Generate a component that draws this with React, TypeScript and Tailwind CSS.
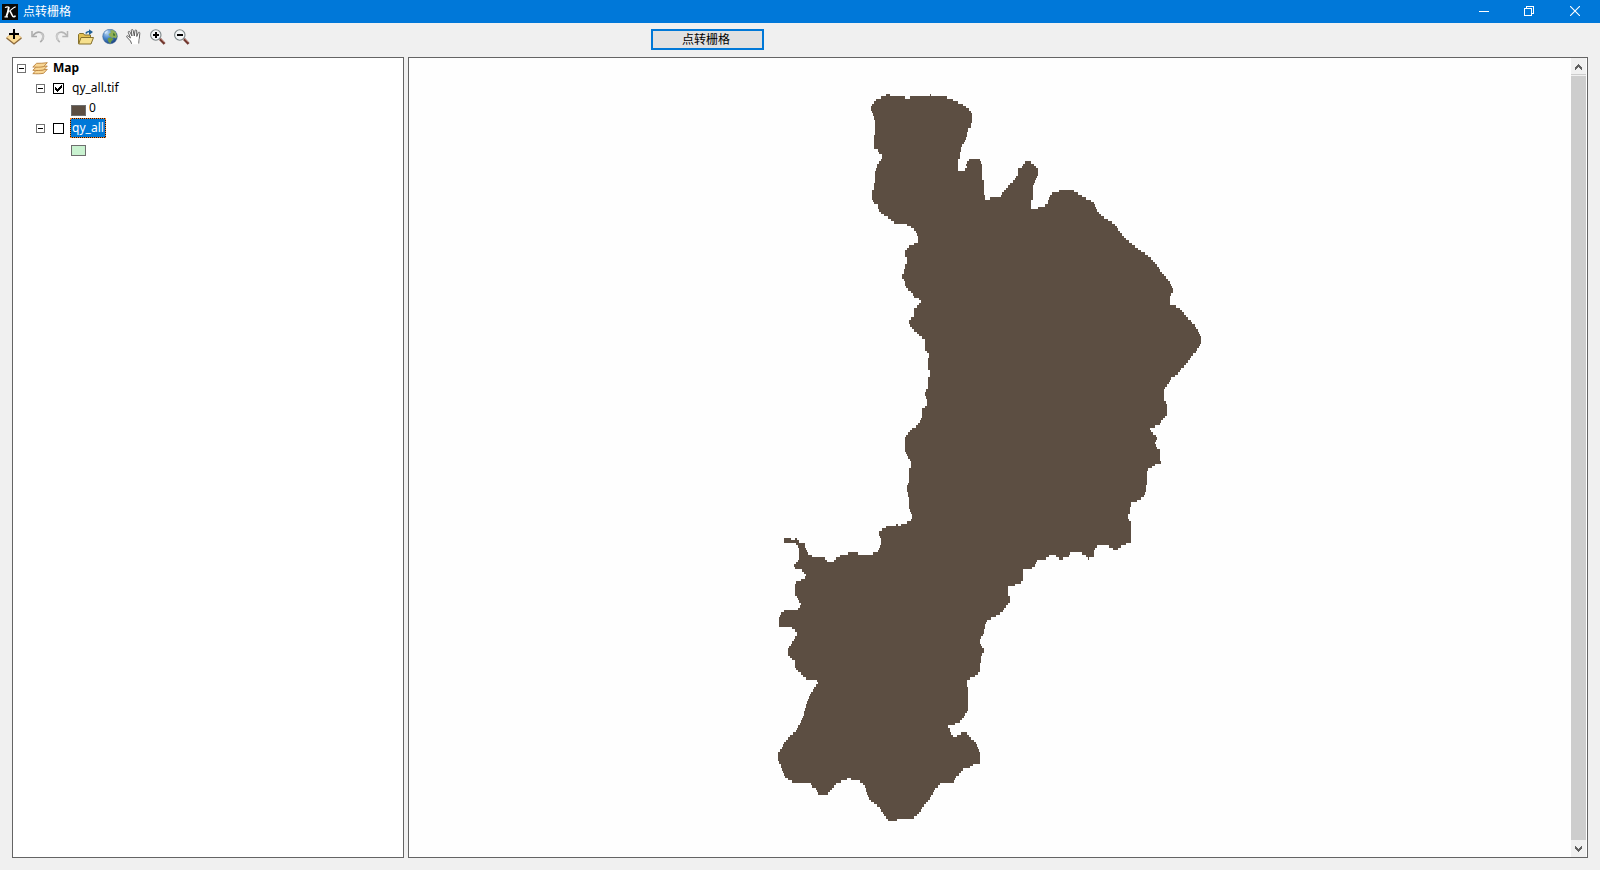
import type { ReactNode } from "react";

type Tile = { x: number; y: number; pts: string };

// Region outline, stored per tile; offsets inside a tile are thirds of a pixel.
const outline: Tile[] = [
  {
    x: 850,
    y: 80,
    pts: "63,80 72,68 80,57 102,50 108,44 120,44 125,50 162,51 165,54 185,52 204,46 242,45 255,51 290,52 312,62 335,72 355,86 363,95 366,110 365,128 361,143 354,147 351,168 342,188 333,205 329,238 324,240 324,272 334,276 345,270 351,262 347,252 352,244 360,235 383,234 391,242 396,255 397,300 402,305 402,340 405,345 405,360 413,360 425,352 450,354 457,338 474,320 492,300 504,283 505,264 515,263 524,247 540,246 553,257 564,268 563,290 555,304 550,318 549,355 543,360 543,383 551,390 561,388 566,381 580,380 592,372 598,350 610,338 635,330 668,330 685,342 710,357",
  },
  {
    x: 1050,
    y: 180,
    pts: "130,66 134,75 141,92 158,109 175,121 197,136 212,160 232,180 250,194 265,209 290,223 305,238 320,254 333,274 345,291 360,304 363,320 369,323 368,338 363,340 360,360 360,372 370,377 387,383 402,400 417,418 435,438 448,460 453,472 453,490 440,512 425,530 410,548 392,570 380,586 364,594 357,608 348,620 342,628 342,660 351,675 351,706 333,722 329,737 305,741 300,746 303,756 314,764 320,772",
  },
  {
    x: 940,
    y: 420,
    pts: "650,50 650,62 645,70 648,82 660,92 660,118 663,128 645,135 630,145 621,150 621,190 618,195 617,218 608,232 595,241 572,250 570,280 564,284 564,298 573,308 573,368 558,372 543,380 530,389 515,386 510,380 490,377 470,379 463,390 461,408 445,416 433,402 410,396 392,399 386,408 372,411 364,420 354,412 345,405 330,405 320,415 292,420 286,436 275,446 250,451 248,480 240,490 220,497 204,499 204,524 210,528 210,545 195,565 180,582 160,592 141,602 135,620 132,643 122,650 121,668 126,682 132,686 131,698 123,705 120,754 105,768 90,776 81,780 81,803 84,805",
  },
  {
    x: 760,
    y: 640,
    pts: "624,210 612,230 600,244 585,252 566,258 564,264 570,268 573,283 582,293 590,288 602,281 610,276 622,280 635,298 650,310 655,330 660,335 660,368 645,370 630,382 612,386 597,402 585,415 580,427 543,430 525,448 510,475 495,492 480,515 462,533 417,534 408,542 386,543 375,528 360,505 348,493 330,482 320,455 312,435 300,425 283,418 262,416 250,422 230,430 215,448 203,463 190,467 175,462 168,448 156,440 152,430 132,426 97,425 77,412 67,395 62,372 54,362 54,340 64,325 80,298 108,273 117,255 130,230 138,195 150,165 163,142 174,128 170,120 140,116 122,101 107,85 104,62 90,53 84,45 84,25 96,10",
  },
  {
    x: 760,
    y: 510,
    pts: "96,400 108,380 114,373 105,362 95,352 83,347 57,348 57,322 64,310 76,300 112,299 117,294 123,283 117,275 112,260 105,253 105,222 113,214 135,206 138,196 130,184 120,178 104,176 102,164 112,155 117,142 117,112 105,97 95,95 72,95 72,87 77,82 92,82 93,88 105,87 106,81 112,90 120,97 134,100 137,118 146,133 162,140 190,138 196,148 208,158 221,159 226,146 240,138 265,130 292,129 297,135 325,134 347,128 356,120 362,108 363,84 357,80 357,67 370,55 382,49 405,47 411,43 416,47 435,41 450,34 456,20 455,10 448,0",
  },
  {
    x: 860,
    y: 270,
    pts: "147,684 142,668 142,650 147,628 148,598 153,595 153,573 145,562 140,550 135,548 135,508 142,492 150,481 165,473 178,458 186,442 187,418 195,410 201,407 201,388 193,378 196,364 204,358 205,320 210,318 210,304 205,300 204,264 209,258 203,248 195,238 194,210 180,198 165,185 154,172 147,162 148,151 158,142 166,136 162,128 163,115 174,106 183,96 178,87 165,83 152,66 137,50 132,30 126,26 126,16 132,12 132,0",
  },
  {
    x: 850,
    y: 80,
    pts: "165,568 166,552 171,550 170,532 165,528 166,512 178,497 196,491 204,486 204,467 198,455 187,443 172,435 150,434 133,428 115,413 95,400 85,388 83,375 72,372 66,358 66,332 72,328 76,270 82,255 90,242 97,238 96,224 88,220 84,210 72,205 72,165 76,160 75,135 71,105 66,98 63,90",
  },
];

const ring = outline.flatMap((t) =>
  t.pts.split(" ").map((p) => {
    const [a, b] = p.split(",").map(Number);
    return [t.x + a / 3, t.y + b / 3] as const;
  }),
);

// Scan the outline into raster rows: one run of cells between each pair of crossings.
function rasterize(cell: number) {
  const runs: string[] = [];
  for (let i = 0; 94 + i * cell < 822; i++) {
    const top = Math.round(94 + i * cell);
    const bottom = Math.round(94 + (i + 1) * cell);
    const mid = (top + bottom) / 2 + 0.01;
    const xs: number[] = [];
    ring.forEach(([x1, y1], k) => {
      const [x2, y2] = ring[(k + 1) % ring.length];
      if (y1 > mid !== y2 > mid) xs.push(x1 + ((mid - y1) / (y2 - y1)) * (x2 - x1));
    });
    xs.sort((a, b) => a - b);
    for (let k = 0; k + 1 < xs.length; k += 2) {
      runs.push(`M${Math.round(xs[k])} ${top}H${Math.round(xs[k + 1])}V${bottom}H${Math.round(xs[k])}z`);
    }
  }
  return runs.join("");
}

const regionPath = rasterize(2.4);

function Icon({ children }: { children: ReactNode }) {
  return (
    <svg width="16" height="16" viewBox="0 0 16 16" fill="none" className="block shrink-0">
      {children}
    </svg>
  );
}

function AddDataIcon() {
  return (
    <Icon>
      <path d="M.6 8.500 8 3l7.400 5.500L8 14.500z" fill="#fbdc95" stroke="#d9b071" strokeWidth=".8" />
      <path d="M.5 9 8 15l7.500-6" stroke="#8d6a3c" strokeWidth="1.300" />
      <path d="M8 0v10M3 5h10" stroke="#000" strokeWidth="2" />
    </Icon>
  );
}

function UndoIcon() {
  return (
    <Icon>
      <path d="M2 2v5.500h5" stroke="#aaa" strokeWidth="1.500" />
      <path d="M2.800 6.800C5.500 3.300 8 2.600 10.500 3.400c3.700 1.200 4 5.700 1 8.600l-1.300 1" stroke="#aaa" strokeWidth="1.600" />
      <path d="M11.200 4.300c2.200 1.200 2.600 4 .6 6.600" stroke="#c4c4c4" strokeWidth="2" />
    </Icon>
  );
}

function RedoIcon() {
  return (
    <Icon>
      <path d="M13.500 2v5.500H8.300" stroke="#b5b5b5" strokeWidth="1.500" />
      <path d="M13 6.800C10.500 3.300 8 2.600 5.500 3.400c-3.700 1.200-4 5.700-1 8.600l1.300 1" stroke="#b5b5b5" strokeWidth="1.600" />
      <path d="M4.800 4.300C2.600 5.500 2.200 8.300 4.200 10.900" stroke="#ccc" strokeWidth="2" />
    </Icon>
  );
}

function FolderIcon() {
  return (
    <Icon>
      <path d="M.5 14.500V5.500l1-1h4l1 1.500h6v8.500z" fill="#e2c052" stroke="#85702c" />
      <path d="M3 8.500h12.500l-2.500 6.500H.7z" fill="#f6e08d" stroke="#85702c" />
      <path d="M8 4.500c.4-1.500 1.500-2 4-2" stroke="#1d5f97" strokeWidth="1.600" />
      <path d="M11 .2 15 3l-4 3z" fill="#1d5f97" />
    </Icon>
  );
}

function GlobeIcon() {
  return (
    <Icon>
      <defs>
        <radialGradient id="ocean" cx=".3" cy=".25" r=".8">
          <stop offset="0" stopColor="#b9d7f5" />
          <stop offset=".5" stopColor="#4482c8" />
          <stop offset="1" stopColor="#1c4484" />
        </radialGradient>
      </defs>
      <circle cx="8" cy="7.500" r="7.300" fill="url(#ocean)" stroke="#345f8d" strokeWidth=".5" />
      <path d="M8 1.500 11 .9l3 2.600 1 4-1 2-2-1-2 .5L7.500 7 6.500 5 9 3.500z" fill="#8fae58" />
      <path d="M7 8.500 10 9l1.500 1.500-2 1.500-1 2.500L6.500 13 5.500 10z" fill="#6f9b44" />
      <path d="m11 4 2 1v2l-2-.5z" fill="#467c32" />
      <path d="M2.500 3.500 5 1.500l1 .5-2.500 3z" fill="#d3e6f8" />
    </Icon>
  );
}

function HandIcon() {
  return (
    <Icon>
      <path
        d="M5.500 14.500 4.500 12 .8 8c-.5-1 .4-1.700 1.300-1L4.500 9 2.300 3.500c-.3-1.200 1-1.700 1.600-.6L6 7 5.300 1.500c0-1.300 1.500-1.400 1.800-.2L8.300 7 9 1.700c.2-1.100 1.600-1 1.700.2L10.800 7.500l1.500-3.800c.5-1 1.700-.5 1.500.6L13.300 9.500l-.8 5z"
        fill="#fff"
        stroke="#505050"
        strokeWidth=".9"
      />
      <path d="M6 14.500h6.500" stroke="#fff" strokeWidth="1.400" />
      <path d="M13.200 10v4.500" stroke="#c9c9c9" />
    </Icon>
  );
}

function ZoomIcon({ plus }: { plus?: boolean }) {
  return (
    <Icon>
      <path d="m10 10 4.600 4.800" stroke="#70372e" strokeWidth="2.600" />
      <path d="m10.500 9.500 4 4" stroke="#c08478" strokeWidth=".8" />
      <circle cx="5.800" cy="6" r="5.200" fill="#f4f7f8" stroke="#7b8587" strokeWidth="1.100" />
      <path d="M3 6h6" stroke="#000" strokeWidth="2" />
      {plus && <path d="M6 3v6" stroke="#000" strokeWidth="2" />}
    </Icon>
  );
}

function LayersIcon() {
  return (
    <svg width="16" height="13" viewBox="0 0 16 13" className="block shrink-0">
      {[7, 3.7, 0.4].map((y) => (
        <path
          key={y}
          transform={`translate(0 ${y})`}
          d="M.8 4.600 4.600.9C8 .9 11.500.9 15.300.3L11.600 4.300C8 4.900 4.500 4.900.8 4.600z"
          fill="#f9d795"
          stroke="#b9803a"
          strokeWidth=".9"
        />
      ))}
    </svg>
  );
}

function Expander() {
  return (
    <svg width="9" height="9" viewBox="0 0 9 9" className="block shrink-0" shapeRendering="crispEdges">
      <rect x=".5" y=".5" width="8" height="8" fill="#fff" stroke="#737373" />
      <path d="M2 4.500h5" stroke="#000" />
    </svg>
  );
}

function Check({ on }: { on?: boolean }) {
  return (
    <svg width="11" height="11" viewBox="0 0 11 11" className="block shrink-0" shapeRendering="crispEdges">
      <path d="M.5.5h10v10H.5z" fill="#fff" stroke="#000" />
      {on && <path d="M2 4h1v1h1v1h1V5h1V4h1V3h1V2h1v3H8v1H7v1H6v1H5v1H4V8H3V7H2z" fill="#000" />}
    </svg>
  );
}

function TitleBar() {
  return (
    <header className="flex h-[23px] shrink-0 items-center bg-[#0078d9] pl-[2px] text-white">
      <svg width="16" height="16" viewBox="0 0 16 16" className="block shrink-0" fill="none" stroke="#fff">
        <rect width="16" height="16" fill="#080808" stroke="none" />
        <path d="M6.900 3C6.200 7 5.400 10 4.300 12.700" strokeWidth="1.800" />
        <path d="M3 3.700c1.300-1.100 2.800-1 4.200-.5M2.500 12.900h3.500M13.700 2.900C11 3 9.500 6.500 6 8" strokeWidth="1.100" />
        <path d="M7.700 7.300c2 .7 2 5.600 4.100 5.500.8 0 1.300-.5 1.700-1.200" strokeWidth="1.500" />
      </svg>
      <span className="ml-[5px] text-[12px] leading-[22px]">点转栅格</span>
      <div className="ml-auto flex items-center pr-5 pb-[2px]">
        <svg width="10" height="10" viewBox="0 0 10 10" className="mr-[35px] block" shapeRendering="crispEdges">
          <path d="M0 5.500h10" stroke="#fff" />
        </svg>
        <svg width="10" height="10" viewBox="0 0 10 10" className="mr-9 block" fill="none" shapeRendering="crispEdges">
          <path d="M.5 2.500h7v7h-7zM2.500 2.500v-2h7v7h-2" stroke="#fff" />
        </svg>
        <svg width="10" height="10" viewBox="0 0 10 10" className="block">
          <path d="m0 0 10 10M10 0 0 10" stroke="#fff" strokeWidth="1.100" />
        </svg>
      </div>
    </header>
  );
}

function Toolbar() {
  return (
    <div className="flex h-[34px] shrink-0 items-start pt-[6px] pl-[6px]">
      <div className="flex w-[645px] gap-2">
        <AddDataIcon />
        <UndoIcon />
        <RedoIcon />
        <FolderIcon />
        <GlobeIcon />
        <HandIcon />
        <ZoomIcon plus />
        <ZoomIcon />
      </div>
      <button className="flex h-[21px] w-[113px] items-center justify-center border-2 border-[#0078d7] bg-[#e1e1e1] pr-[3px] text-[12px] leading-none text-black">
        点转栅格
      </button>
    </div>
  );
}

function LayerTree() {
  return (
    <aside className="w-[392px] shrink-0 border border-[#646464] bg-white text-[12px] leading-5 text-black">
      <div className="flex h-5 items-center pl-1">
        <Expander />
        <span className="ml-[6px]">
          <LayersIcon />
        </span>
        <span className="ml-[5px] font-bold">Map</span>
      </div>
      <div className="flex h-5 items-center pl-[23px]">
        <Expander />
        <span className="ml-2">
          <Check on />
        </span>
        <span className="ml-2">qy_all.tif</span>
      </div>
      <div className="flex h-5 items-center pl-[58px]">
        <span className="mt-[5px] h-[11px] w-[15px] border border-[#6e6e6e] bg-[#5c4e42]" />
        <span className="ml-[3px]">0</span>
      </div>
      <div className="flex h-5 items-center pl-[23px]">
        <Expander />
        <span className="ml-2">
          <Check />
        </span>
        <span className="ml-[6px] flex h-5 w-9 items-center justify-center border border-dotted border-[#ff8728] bg-[#0f1a28] bg-clip-border text-white">
          <span className="flex h-full w-full items-center justify-center bg-[#0078d7]">qy_all</span>
        </span>
      </div>
      <div className="flex h-5 items-center pl-[58px]">
        <span className="mt-[5px] h-[11px] w-[15px] border border-[#6e6e6e] bg-[#c9f2d0]" />
      </div>
    </aside>
  );
}

function Arrow({ down }: { down?: boolean }) {
  return (
    <svg width="7" height="6" viewBox="0 0 7 6" className="block" shapeRendering="crispEdges">
      <path
        transform={down ? "matrix(1 0 0 -1 0 6)" : undefined}
        d="M3 0h1v1h1v1h1v1h1v3H6V5H5V4H4V3H3v1H2v1H1v1H0V3h1V2h1V1h1z"
        fill="#606060"
      />
    </svg>
  );
}

function MapView() {
  return (
    <main className="flex w-[1180px] border border-[#646464] bg-[#fefefe]">
      <svg width="1162" height="799" viewBox="409 58 1162 799" className="block shrink-0" shapeRendering="crispEdges">
        <path d={regionPath} fill="#5c4e42" />
      </svg>
      <div className="flex w-[15px] flex-col bg-[#f0f0f0]">
        <div className="flex h-4 items-center justify-center pt-[2px]">
          <Arrow />
        </div>
        <div className="h-px bg-[#cdcdcd]" />
        <div className="mt-px h-[764px] bg-[#cdcdcd]" />
        <div className="flex flex-1 items-center justify-center">
          <Arrow down />
        </div>
      </div>
    </main>
  );
}

export default function App() {
  return (
    <div className="flex h-[870px] w-[1600px] flex-col overflow-hidden bg-[#f0f0f0] font-['Noto_Sans','Noto_Sans_CJK_SC',sans-serif]">
      <TitleBar />
      <Toolbar />
      <div className="flex h-[801px] gap-1 pl-3">
        <LayerTree />
        <MapView />
      </div>
    </div>
  );
}
